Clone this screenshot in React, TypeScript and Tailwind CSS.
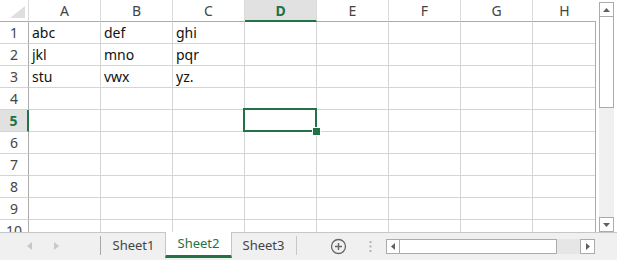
import type { FC } from 'react';

const COLS = ['A', 'B', 'C', 'D', 'E', 'F', 'G', 'H'];
const ROWS = [1, 2, 3, 4, 5, 6, 7, 8, 9, 10];
const DATA: Record<number, string[]> = {
  1: ['abc', 'def', 'ghi'],
  2: ['jkl', 'mno', 'pqr'],
  3: ['stu', 'vwx', 'yz.'],
};
const FONT = { fontFamily: '"Noto Sans", "Open Sans", sans-serif' };

const Corner: FC = () => (
  <div className="w-[29px] h-[22px] shrink-0 border-r border-r-[#dadada] border-b border-b-[#ababab] bg-white">
    <svg width="28" height="21" viewBox="0 0 28 21">
      <polygon points="10,18 25,18 25,6" fill="#dfdfdf" />
    </svg>
  </div>
);

const HeaderRow: FC = () => (
  <div className="flex h-[22px]">
    <Corner />
    {COLS.map((c, i) => {
      const active = c === 'D';
      const last = i === COLS.length - 1;
      return (
        <div
          key={c}
          className={`h-[22px] flex items-center justify-center text-[14px] border-b ${last ? 'flex-1' : 'w-[72px] shrink-0 border-r border-r-[#dadada]'} ${active ? 'bg-[#e1e1e1] text-[#217346] font-bold border-b-2 border-b-[#217346] pt-[1px]' : 'bg-white text-[#444] border-b-[#ababab]'}`}
        >
          {c}
        </div>
      );
    })}
  </div>
);

const Row: FC<{ n: number }> = ({ n }) => {
  const active = n === 5;
  const vals = DATA[n] || [];
  return (
    <div className="flex h-[22px] shrink-0">
      <div
        className={`w-[29px] h-[22px] shrink-0 flex items-center justify-center text-[14px] border-b border-b-[#d4d4d4] ${active ? 'bg-[#e1e1e1] text-[#217346] font-bold border-r-2 border-r-[#217346]' : 'bg-white text-[#444] border-r border-r-[#ababab]'}`}
      >
        {n}
      </div>
      {COLS.map((c, i) => {
        const last = i === COLS.length - 1;
        const sel = active && c === 'D';
        return (
          <div
            key={c}
            className={`relative h-[22px] flex items-center pl-[3px] text-[14px] text-[#111] border-b border-b-[#d4d4d4] ${last ? 'flex-1' : 'w-[72px] shrink-0 border-r border-r-[#d4d4d4]'} ${sel ? 'z-10' : ''}`}
          >
            {vals[i] ?? ''}
            {sel && (
              <>
                <div className="absolute -left-[2px] -top-[2px] w-[74px] h-[24px] border-2 border-[#217346]" />
                <div className="absolute left-[67px] top-[17px] w-[7px] h-[7px] bg-[#217346] border border-white box-content" />
              </>
            )}
          </div>
        );
      })}
    </div>
  );
};

const VScroll: FC = () => (
  <div className="w-[21px] shrink-0 bg-white pl-[3px] pr-[3px] pt-[2px] flex flex-col">
    <div className="flex flex-col flex-1 bg-[#f0f0f0]">
      <div className="h-[15px] border border-[#ababab] bg-white flex items-center justify-center">
        <svg width="7" height="4" viewBox="0 0 7 4"><polygon points="0,4 7,4 3.5,0" fill="#606060" /></svg>
      </div>
      <div className="h-[91px] border border-t-0 border-[#ababab] bg-white" />
      <div className="flex-1" />
      <div className="h-[15px] border border-[#ababab] bg-white flex items-center justify-center">
        <svg width="7" height="4" viewBox="0 0 7 4"><polygon points="0,0 7,0 3.5,4" fill="#606060" /></svg>
      </div>
    </div>
  </div>
);

const Tab: FC<{ name: string; active?: boolean }> = ({ name, active }) => (
  <div
    className={`flex items-center justify-center text-[13px] ${active ? 'w-[67px] h-[26px] bg-white text-[#217346] border-l border-r border-[#c6c6c6] border-b-[3px] border-b-[#217346] -mt-[1px] -mx-[1px] relative' : 'w-[65px] h-[25px] text-[#444]'}`}
  >
    {name}
  </div>
);

const TabBar: FC = () => (
  <div className="h-[28px] bg-[#f0f0f0] border-t border-[#c6c6c6] flex items-start">
    <div className="w-[100px] h-[26px] flex items-center gap-[22px] pl-[27px]">
      <svg width="5" height="8" viewBox="0 0 5 8"><polygon points="5,0 5,8 0,4" fill="#c8c8c8" /></svg>
      <svg width="5" height="8" viewBox="0 0 5 8"><polygon points="0,0 0,8 5,4" fill="#c8c8c8" /></svg>
    </div>
    <div className="w-px h-[19px] mt-[3px] bg-[#a8a8a8]" />
    <Tab name="Sheet1" />
    <Tab name="Sheet2" active />
    <Tab name="Sheet3" />
    <div className="w-px h-[19px] mt-[3px] bg-[#c8c8c8]" />
    <div className="h-[26px] flex items-center ml-[33px]">
      <svg width="17" height="17" viewBox="0 0 17 17">
        <circle cx="8.5" cy="8.5" r="7" fill="none" stroke="#666" strokeWidth="1.3" />
        <path d="M8.5 5v7M5 8.5h7" stroke="#666" strokeWidth="1.4" />
      </svg>
    </div>
    <div className="h-[26px] flex items-center ml-[22px]">
      <svg width="3" height="11" viewBox="0 0 3 11">
        <rect x="0.5" y="0" width="2" height="2" fill="#b4b4b4" />
        <rect x="0.5" y="4.5" width="2" height="2" fill="#b4b4b4" />
        <rect x="0.5" y="9" width="2" height="2" fill="#b4b4b4" />
      </svg>
    </div>
    <div className="ml-[14px] mt-[6px] flex h-[15px] w-[209px]">
      <div className="w-[14px] border border-[#ababab] bg-white flex items-center justify-center">
        <svg width="4" height="7" viewBox="0 0 4 7"><polygon points="4,0 4,7 0,3.5" fill="#606060" /></svg>
      </div>
      <div className="w-[157px] border border-l-0 border-[#ababab] bg-white" />
      <div className="flex-1 bg-[#e6e6e6]" />
      <div className="w-[15px] border border-[#ababab] bg-white flex items-center justify-center">
        <svg width="4" height="7" viewBox="0 0 4 7"><polygon points="0,0 0,7 4,3.5" fill="#606060" /></svg>
      </div>
    </div>
  </div>
);

const App: FC = () => (
  <div className="w-[617px] h-[260px] bg-white flex flex-col overflow-hidden select-none" style={FONT}>
    <div className="flex h-[232px] overflow-hidden">
      <div className="w-[596px] shrink-0 flex flex-col overflow-hidden">
        <HeaderRow />
        <div className="flex flex-col border-r border-[#ababab] w-[596px]">
          {ROWS.map((n) => <Row key={n} n={n} />)}
        </div>
      </div>
      <VScroll />
    </div>
    <TabBar />
  </div>
);

export default App;
